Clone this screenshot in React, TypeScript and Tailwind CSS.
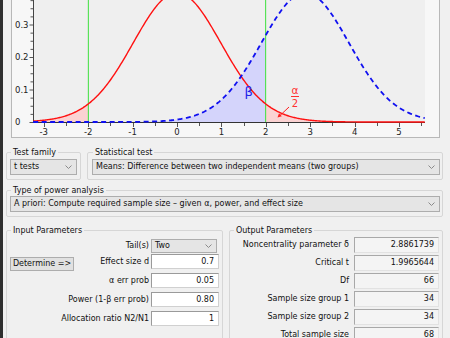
import React from "react";

const X0 = 177, SX = 44.4, Y0 = 122, SY = 325;
const XMIN = -3.24, XMAX = 5.58;
const CRIT = 1.9965644, DELTA = 2.8861739;
const px = (v: number) => X0 + SX * v;
const py = (p: number) => Y0 - SY * p;
const tpdf = (t: number) => 0.39745 * Math.pow(1 + (t * t) / 66, -33.5);
const ncpdf = (t: number) => tpdf(t - DELTA);

function curve(f: (x: number) => number, a: number, b: number) {
  const n = Math.max(2, Math.ceil((b - a) / 0.02));
  let d = "";
  for (let i = 0; i <= n; i++) {
    const x = a + ((b - a) * i) / n;
    d += (i === 0 ? "M" : "L") + px(x).toFixed(2) + " " + py(f(x)).toFixed(2) + " ";
  }
  return d;
}
function area(f: (x: number) => number, a: number, b: number) {
  return curve(f, a, b) + `L${px(b).toFixed(2)} ${Y0} L${px(a).toFixed(2)} ${Y0} Z`;
}

function Graph() {
  const yticks: number[] = [];
  for (let i = 0; i <= 16; i++) yticks.push(i * 0.025);
  const xticks: number[] = [];
  for (let v = -3; v <= 5.5; v += 0.5) xticks.push(v);
  return (
    <svg width="427" height="137" viewBox="12 0 427 137" className="block">
      <rect x="33" y="-2" width="392" height="124" fill="#efefef" />
      <path d={area(ncpdf, XMIN, CRIT)} fill="#d4d4fb" />
      <path d={area(tpdf, XMIN, -CRIT)} fill="#fbd2d2" />
      <path d={area(tpdf, CRIT, XMAX)} fill="#fbd2d2" />
      <line x1={px(-CRIT)} y1="0" x2={px(-CRIT)} y2={Y0} stroke="#3ee03e" strokeWidth="1" />
      <line x1={px(CRIT)} y1="0" x2={px(CRIT)} y2={Y0} stroke="#3ee03e" strokeWidth="1" />
      <line x1="33.5" y1="0" x2="33.5" y2="122.5" stroke="#444" strokeWidth="1" />
      <line x1="33" y1="122.5" x2="425" y2="122.5" stroke="#333" strokeWidth="1" />
      {yticks.map((p, i) => (
        <line key={i} x1={i % 4 === 0 ? 29.5 : 30.5} y1={py(p) + 0.5} x2="33" y2={py(p) + 0.5} stroke="#555" strokeWidth="1" />
      ))}
      {xticks.map((v, i) => (
        <line key={i} x1={Math.round(px(v)) + 0.5} y1="123" x2={Math.round(px(v)) + 0.5} y2={Number.isInteger(v) ? 127 : 126} stroke="#555" strokeWidth="1" />
      ))}
      <path d={curve(tpdf, XMIN, XMAX)} fill="none" stroke="#ff1010" strokeWidth="1.4" />
      <path d={curve(ncpdf, XMIN, XMAX)} fill="none" stroke="#1010f0" strokeWidth="1.8" strokeDasharray="5 3.5" />
      <g fontFamily="'DejaVu Sans', sans-serif" fontSize="8.5" fill="#222">
        {[0, 0.1, 0.2, 0.3].map((p) => (
          <text key={p} x="15" y={py(p) + 3}>{p === 0 ? "0" : p.toFixed(1)}</text>
        ))}
        {[-3, -2, -1, 0, 1, 2, 3, 4, 5].map((v) => (
          <text key={v} x={px(v)} y="135" textAnchor="middle">{v < 0 ? "-" + Math.abs(v) : String(v)}</text>
        ))}
      </g>
      <text x="244.5" y="96" fontFamily="'DejaVu Sans', sans-serif" fontSize="13" fill="#2020e8">β</text>
      <g fontFamily="'DejaVu Sans', sans-serif" fill="#ff3030">
        <text x="295" y="94" fontSize="10.5" textAnchor="middle">α</text>
        <line x1="291" y1="96.5" x2="299" y2="96.5" stroke="#ff3030" strokeWidth="1" />
        <text x="295" y="107" fontSize="10" textAnchor="middle">2</text>
      </g>
      <line x1="289" y1="107" x2="280" y2="115.5" stroke="#ff2020" strokeWidth="1" />
      <polygon points="277.5,117.5 281.8,116.2 279.0,113.3" fill="#ff2020" />
    </svg>
  );
}

function Chevron() {
  return (
    <svg width="7" height="4" viewBox="0 0 7 4" className="block">
      <polyline points="0.5,0.5 3.5,3.5 6.5,0.5" fill="none" stroke="#8a8a8a" strokeWidth="1" />
    </svg>
  );
}

function Select({ text }: { text: string }) {
  return (
    <div className="flex h-[16px] items-center justify-between border border-[#adadad] bg-[#e5e5e5] pl-[3px] pr-[4px] leading-none">
      <span className="whitespace-nowrap">{text}</span>
      <Chevron />
    </div>
  );
}

function Legend({ children }: { children: React.ReactNode }) {
  return <legend className="ml-[1px] px-[2px] text-[8px] leading-[11px] text-[#111]">{children}</legend>;
}

function InRow({ label, value, mt }: { label: string; value: string; mt: string }) {
  return (
    <div className={`flex h-[15px] items-center ${mt}`}>
      <div className="flex-1 whitespace-nowrap pr-[2px] text-right">{label}</div>
      <div className="flex h-[15px] w-[68px] items-center justify-end border border-[#9a9a9a] border-b-[#d0d0d0] border-r-[#d0d0d0] bg-white pr-[4px]">
        {value}
      </div>
    </div>
  );
}

function OutRow({ label, value }: { label: string; value: string }) {
  return (
    <div className="flex h-[16px] items-center">
      <div className="flex-1 whitespace-nowrap pr-[5px] text-right">{label}</div>
      <div className="flex h-[16px] w-[85px] items-center justify-end border border-[#a8a8a8] border-b-[#e2e2e2] border-r-[#e2e2e2] bg-[#f4f4f4] pr-[4px]">
        {value}
      </div>
    </div>
  );
}

export default function App() {
  return (
    <div className="flex h-[338px] w-[450px] overflow-hidden bg-[#f0f0f0] font-['DejaVu_Sans',sans-serif] text-[8px] leading-none text-[#111]">
      <div className="w-[3px] shrink-0 bg-[#2e2e2e]" />
      <div className="flex flex-1 flex-col">
        <div className="ml-[8px] h-[138px] w-[429px] shrink-0 overflow-hidden border-x border-b border-[#b8b8b8] bg-[#f7f7f7]">
          <Graph />
        </div>

        <div className="mt-[9px] flex gap-[6px] pl-[3px] pr-[7px]">
          <fieldset className="w-[75px] rounded-[2px] border border-[#d6d6d6] px-[3px] pb-[4px] pt-[1px]">
            <Legend>Test family</Legend>
            <Select text="t tests" />
          </fieldset>
          <fieldset className="flex-1 rounded-[2px] border border-[#d6d6d6] pb-[4px] pl-[4px] pr-[2px] pt-[1px]">
            <Legend>Statistical test</Legend>
            <Select text="Means: Difference between two independent means (two groups)" />
          </fieldset>
        </div>

        <div className="mt-[5px] flex pl-[3px] pr-[7px]">
          <fieldset className="flex-1 rounded-[2px] border border-[#d6d6d6] pb-[4px] pl-[3px] pr-[2px] pt-0">
            <Legend>Type of power analysis</Legend>
            <Select text="A priori: Compute required sample size – given α, power, and effect size" />
          </fieldset>
        </div>

        <div className="mt-[8px] flex gap-[6px] pl-[3px] pr-[7px]">
          <fieldset className="h-[140px] w-[217px] shrink-0 rounded-[2px] border border-[#d6d6d6] px-[3px] pt-[3px]">
            <Legend>Input Parameters</Legend>
            <div className="flex h-[14px] items-center">
              <div className="flex-1 pr-[2px] text-right">Tail(s)</div>
              <div className="mr-[2px] flex h-[14px] w-[66px] items-center justify-between border border-[#adadad] bg-[#e5e5e5] pl-[3px] pr-[4px]">
                <span>Two</span>
                <Chevron />
              </div>
            </div>
            <div className="mt-[1px] flex h-[15px] items-start">
              <div className="mt-[3px] flex h-[14px] w-[64px] items-center justify-center border border-[#adadad] bg-[#e1e1e1]">
                Determine =&gt;
              </div>
              <div className="flex h-[15px] flex-1 items-center justify-end pr-[2px]">Effect size d</div>
              <div className="flex h-[15px] w-[68px] items-center justify-end border border-[#9a9a9a] border-b-[#d0d0d0] border-r-[#d0d0d0] bg-white pr-[4px]">
                0.7
              </div>
            </div>
            <InRow label="α err prob" value="0.05" mt="mt-[4px]" />
            <InRow label="Power (1-β err prob)" value="0.80" mt="mt-[4px]" />
            <InRow label="Allocation ratio N2/N1" value="1" mt="mt-[4px]" />
          </fieldset>
          <fieldset className="h-[140px] flex-1 rounded-[2px] border border-[#d6d6d6] pl-[3px] pr-[3px] pt-[1px]">
            <Legend>Output Parameters</Legend>
            <div className="flex flex-col gap-[2px]">
              <OutRow label="Noncentrality parameter δ" value="2.8861739" />
              <OutRow label="Critical t" value="1.9965644" />
              <OutRow label="Df" value="66" />
              <OutRow label="Sample size group 1" value="34" />
              <OutRow label="Sample size group 2" value="34" />
              <OutRow label="Total sample size" value="68" />
            </div>
          </fieldset>
        </div>
      </div>
    </div>
  );
}
